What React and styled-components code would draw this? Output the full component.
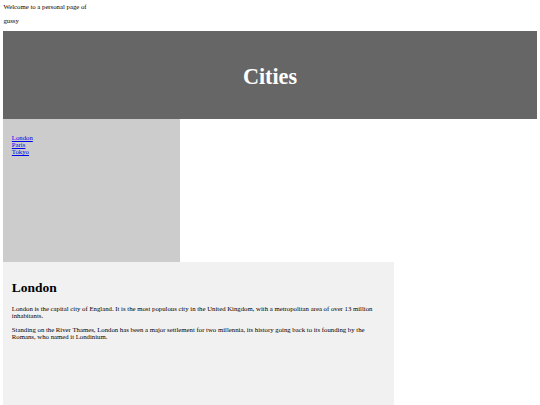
import React from "react";
import styled, { createGlobalStyle } from "styled-components";

const GlobalStyle = createGlobalStyle`
  body {
    margin: 3.375px;
    font-family: "Liberation Serif", "Times New Roman", serif;
    font-size: 6.75px;
    color: #000;
    background: #fff;
  }
`;

const Owner = styled.p`
  margin: 6.75px 0 7.2px;
`;

const Header = styled.header`
  background-color: #666;
  padding: 12.66px;
  text-align: center;
  font-size: 14.77px;
  color: white;

  h2 {
    margin: 20.2px 0 16.2px;
    font-size: 1.5em;
    font-weight: bold;
  }
`;

const Section = styled.section`
  display: flex;
  flex-wrap: wrap;
`;

const Nav = styled.nav`
  box-sizing: content-box;
  width: 30%;
  height: 126.56px;
  padding: 8.44px;
  background: #ccc;

  ul {
    list-style-type: none;
    padding: 0;
    margin: 6.75px 0;
  }

  a {
    color: #0000ee;
  }
`;

const Article = styled.article`
  box-sizing: content-box;
  width: 70%;
  height: 126.56px;
  padding: 8.44px;
  background-color: #f1f1f1;

  h1 {
    font-size: 13.5px;
    margin: 0.67em 0;
  }

  p {
    margin: 6.75px 0;
  }
`;

const cities = ["London", "Paris", "Tokyo"];

export default function App() {
  return (
    <>
      <GlobalStyle />
      Welcome to a personal page of
      <Owner>gussy</Owner>

      <Header>
        <h2>Cities</h2>
      </Header>

      <Section>
        <Nav>
          <ul>
            {cities.map((c) => (
              <li key={c}>
                <a href="#">{c}</a>
              </li>
            ))}
          </ul>
        </Nav>

        <Article>
          <h1>London</h1>
          <p>
            London is the capital city of England. It is the most populous city in the United
            Kingdom, with a metropolitan area of over 13 million inhabitants.
          </p>
          <p>
            Standing on the River Thames, London has been a major settlement for two millennia, its
            history going back to its founding by the Romans, who named it Londinium.
          </p>
        </Article>
      </Section>
    </>
  );
}
